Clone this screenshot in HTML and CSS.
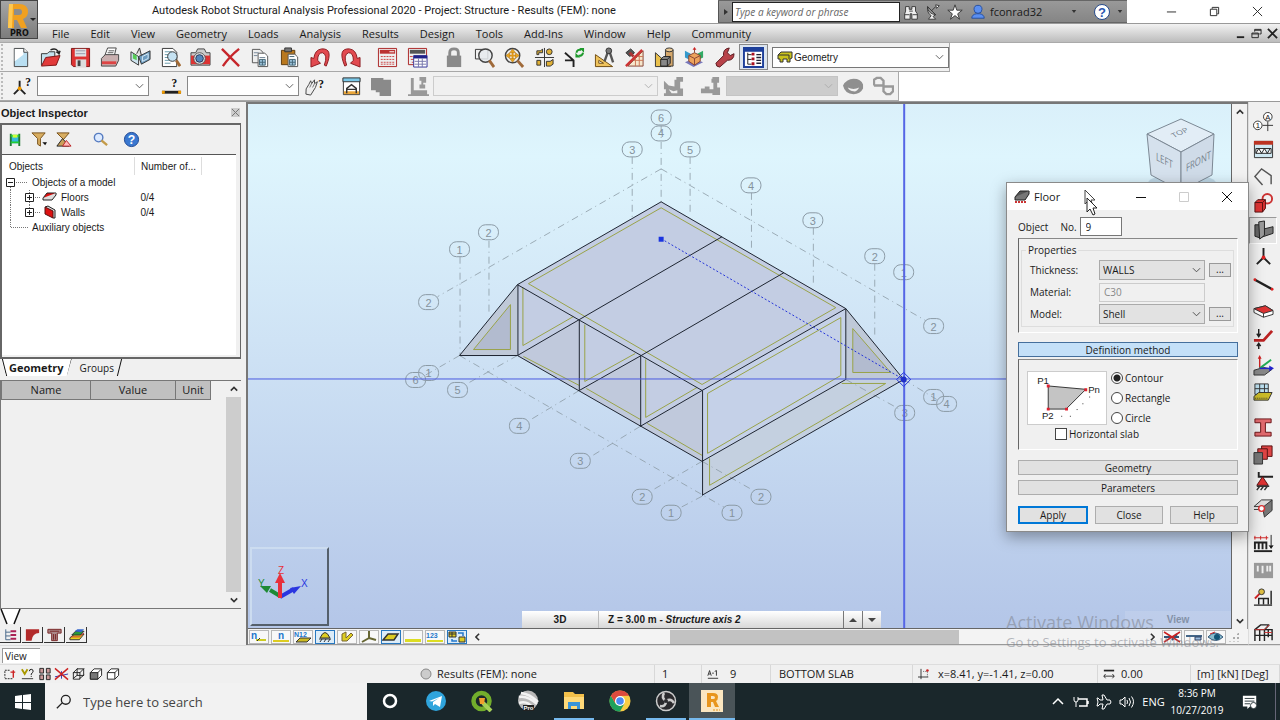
FILE: index.html
```html
<!DOCTYPE html>
<html lang="en">
<head>
<meta charset="utf-8">
<title>Autodesk Robot Structural Analysis Professional 2020</title>
<link rel="stylesheet" href="styles.css">
</head>
<body>
<header class="titlebar">
  <button class="app-button" aria-label="Application menu">
    <svg viewBox="0 0 38 38"><path d="M7 27L8 3h10q9 0 9 8 0 5-5 7l4 9h-6l-4-8h-3v8z" fill="#f0a020"/><path d="M13 8h5q3 0 3 3t-3 3h-5z" fill="#8d8d8d"/><path d="M7 27L8 3h4l-1 24z" fill="#ffc850"/><path d="M29 17h6l-3 3z" fill="#222"/></svg>
    <span class="pro">PRO</span>
  </button>
  <h1 class="app-title">Autodesk Robot Structural Analysis Professional 2020 - Project: Structure - Results (FEM): none</h1>
  <div class="infocenter">
    <button class="info-arrow" aria-label="Expand search"><svg viewBox="0 0 8 10"><path d="M2 2l4 3-4 3z" fill="#333"/></svg></button>
    <input class="info-search" type="text" placeholder="Type a keyword or phrase" aria-label="Search help">
    <button class="info-icon" aria-label="Search"><svg viewBox="0 0 20 20"><path d="M4 4h4v3h3V4h4v5l2 3v6h-6v-6H9v6H3v-6l1-3z" fill="#eee" stroke="#333"/><path d="M3 13h5M12 13h5M8 9h4" stroke="#333"/></svg></button>
    <button class="info-icon" aria-label="Communication center"><svg viewBox="0 0 20 20"><path d="M4 4q0 8 9 9l-3 2 3 3H5l3-4Q3 11 4 4z" fill="#f4f4f4" stroke="#333"/><path d="M4 4l9 9" stroke="#333"/><path d="M8 9l5-5M13 2l4 1-3 3z" stroke="#333" fill="#fff"/></svg></button>
    <button class="info-icon" aria-label="Favorites"><svg viewBox="0 0 20 20"><path d="M10 2l2 6h6l-5 4 2 6-5-4-5 4 2-6-5-4h6z" fill="#fff" stroke="#333"/></svg></button>
    <button class="user-button"><svg viewBox="0 0 18 18"><circle cx="9" cy="6" r="4.500" fill="#5b8ff0" stroke="#234a9a"/><path d="M2 16q0-4 5-5h4q5 1 5 5z" fill="#5b8ff0" stroke="#234a9a"/></svg><span>fconrad32</span><svg class="drop" viewBox="0 0 8 6"><path d="M1 1h6L4 5z" fill="#333"/></svg></button>
    <button class="help-button" aria-label="Help"><svg viewBox="0 0 18 18"><circle cx="9" cy="9" r="7.500" fill="#fff" stroke="#274b8c"/><text x="9" y="14" text-anchor="middle" class="q-mark">?</text></svg><svg class="drop" viewBox="0 0 8 6"><path d="M1 1h6L4 5z" fill="#333"/></svg></button>
  </div>
  <div class="window-buttons">
    <button aria-label="Minimize"><svg viewBox="0 0 12 12"><path d="M1 6.500h10" stroke="#222"/></svg></button>
    <button aria-label="Restore"><svg viewBox="0 0 12 12"><path d="M1.500 3.500h7v7h-7zM3.500 3V1.500h7v7H9" fill="none" stroke="#222"/></svg></button>
    <button aria-label="Close"><svg viewBox="0 0 12 12"><path d="M1 1l10 10M11 1L1 11" stroke="#222"/></svg></button>
  </div>
</header>

<nav class="menubar">
  <button>File</button><button>Edit</button><button>View</button><button>Geometry</button><button>Loads</button><button>Analysis</button><button>Results</button><button>Design</button><button>Tools</button><button>Add-Ins</button><button>Window</button><button>Help</button><button>Community</button>
  <div class="child-buttons">
    <button aria-label="Minimize view"><svg viewBox="0 0 12 12"><path d="M2 10h8" stroke="#222" stroke-width="2"/></svg></button>
    <button aria-label="Restore view"><svg viewBox="0 0 12 12"><path d="M1 5.500h7v5H1zM1 6.500h7M4 4V1.500h7v5H9M4 2.500h7" fill="none" stroke="#222"/></svg></button>
    <button aria-label="Close view"><svg viewBox="0 0 12 12"><path d="M1 1l10 10M11 1L1 11" stroke="#222" stroke-width="2"/></svg></button>
  </div>
</nav>

<div class="toolrow">
 <div class="toolbar">
  <button aria-label="New"><svg viewBox="0 0 22 22"><path d="M4.500 1.500h10l4 4v15h-14z" fill="#b9dff2" stroke="#444"/><path d="M5 2h9v6L5 15z" fill="#fff"/><path d="M14.500 1.500v4h4" fill="#fff" stroke="#444"/></svg></button>
  <button aria-label="Open"><svg viewBox="0 0 22 22"><path d="M1.500 19V7h6l2-2h6v7" fill="#c4e2ee" stroke="#333"/><path d="M1.500 20L6 11l15-2-4 10z" fill="#e23a3a" stroke="#7d1515"/><path d="M11 3q7-3 9 4l1-3m-1 3l-3-2" fill="none" stroke="#222" stroke-width="1.500"/></svg></button>
  <button aria-label="Save"><svg viewBox="0 0 22 22"><path d="M1.500 1.500h19v19h-17l-2-2z" fill="#d33" stroke="#7d1515"/><path d="M5 2h12v8H5z" fill="#dfe3e6"/><path d="M6 13h11v8H6z" fill="#ddd"/><path d="M8 14h3v6H8z" fill="#444"/><path d="M6 4h10M6 7h10" stroke="#99a"/></svg></button>
  <button aria-label="Print"><svg viewBox="0 0 22 22"><path d="M5 9l3-8h9l-2 8z" fill="#fff" stroke="#444"/><path d="M1.500 12l4-4h14v6l-3 6h-15z" fill="#c9b0b0" stroke="#444"/><path d="M2 15h15v3H2z" fill="#d44"/><path d="M9 4h6M8 6h6" stroke="#555"/></svg></button>
  <button aria-label="Screen preview"><svg viewBox="0 0 22 22"><path d="M1 5l8 5v9L1 14z" fill="#cfe4ef" stroke="#333"/><path d="M9 10l3 8 9-5V4z" fill="#6d9cc0" stroke="#333"/><path d="M3 7l4 2v5l-4-2z" fill="#5c5"/><path d="M7 7l3-6 2 8" fill="#ddd" stroke="#333"/><path d="M13 10l6-3v5l-6 3z" fill="none" stroke="#d9ecf8"/></svg></button>
  <button aria-label="Print preview"><svg viewBox="0 0 22 22"><path d="M2.500 1.500h11l4 4v15h-15z" fill="#fff" stroke="#333"/><path d="M5 5h7M5 8h9M5 11h5M5 14h5M5 17h6" stroke="#69a"/><circle cx="13" cy="10" r="5" fill="#c5e2f2" stroke="#333"/><path d="M17 14l4 6" stroke="#a26a35" stroke-width="3"/></svg></button>
  <button aria-label="Screen capture"><svg viewBox="0 0 22 22"><path d="M1 6h5l2-4h7l2 4h4v13H1z" fill="#ccc" stroke="#444"/><path d="M1 9h20v9H1z" fill="#d33"/><circle cx="10" cy="12" r="6" fill="#eee" stroke="#555"/><circle cx="10" cy="12" r="4" fill="#58b" stroke="#235"/></svg></button>
  <button aria-label="Delete"><svg viewBox="0 0 22 22"><path d="M2 2l18 18M20 2Q10 10 3 20" stroke="#c6262b" stroke-width="2.500" fill="none"/></svg></button>
  <button aria-label="Copy"><svg viewBox="0 0 22 22"><path d="M2.500 2.500h8l3 3v11h-11z" fill="#eee" stroke="#555"/><path d="M8.500 6.500h7l3 3v11h-10z" fill="#fff" stroke="#555"/><path d="M4 6h5M4 9h4M10 11h6" stroke="#789"/><path d="M10 13h6v6h-6z" fill="#9cc4dc" stroke="#467"/><path d="M13 13v6M10 16h6" stroke="#467"/></svg></button>
  <button aria-label="Paste"><svg viewBox="0 0 22 22"><path d="M1.500 3.500h14v15h-14z" fill="#b9781e" stroke="#5c3a0c"/><path d="M5 1h7v4H5z" fill="#777" stroke="#333"/><path d="M8.500 7.500h7l3 3v10h-10z" fill="#fff" stroke="#555"/><path d="M10 13h6v6h-6z" fill="#9cc4dc" stroke="#467"/><path d="M13 13v6M10 16h6M10 10h5" stroke="#467"/></svg></button>
  <button aria-label="Undo"><svg viewBox="0 0 22 22"><path d="M17 20q8-19-5-18Q5 3 4 12l-3-1v10l10-4-3-3q0-8 5-8 6 2 2 13z" fill="#e24a50" stroke="#8a1b20"/></svg></button>
  <button aria-label="Redo"><svg viewBox="0 0 22 22"><path d="M5 20Q-3 1 10 2q7 1 8 10l3-1v10l-10-4 3-3q0-8-5-8-6 2-2 13z" fill="#e24a50" stroke="#8a1b20"/></svg></button>
  <span class="gap"></span>
  <button aria-label="Calculations"><svg viewBox="0 0 22 22"><path d="M1.500 1.500h19v19h-19z" fill="#eee" stroke="#a22"/><path d="M3 3h16v4H3z" fill="#b33"/><path d="M13 5h5" stroke="#fff"/><path d="M4 10h14M4 13h14M4 16h14M4 18h14" stroke="#c44" stroke-dasharray="2 1"/></svg></button>
  <button aria-label="Analysis types"><svg viewBox="0 0 22 22"><path d="M1.500 1.500h19v17h-19z" fill="#eee" stroke="#a22"/><path d="M3 3h16v4H3z" fill="#555"/><path d="M3 10h3M4 13h3M5 16h3" stroke="#c44"/><path d="M7 9h14v12H7z" fill="#fff" stroke="#339"/><path d="M7 9h14v3H7z" fill="#228"/><path d="M8 15h12M8 18h12M12 12v9M16 12v9" stroke="#77a"/></svg></button>
  <span class="gap"></span>
  <button aria-label="Lock results"><svg viewBox="0 0 22 22"><path d="M6 10V6q0-4 4.500-4T15 6v4" fill="none" stroke="#8a8a8a" stroke-width="3"/><path d="M3 9h15v12H3z" fill="#8a8a8a"/></svg></button>
  <button aria-label="Zoom window"><svg viewBox="0 0 22 22"><path d="M1.500 2.500h13v10h-13z" fill="none" stroke="#333"/><circle cx="12" cy="9" r="7" fill="#e6ebee" fill-opacity=".85" stroke="#444" stroke-width="1.500"/><path d="M16 14l5 7" stroke="#a06a3a" stroke-width="3"/></svg></button>
  <button aria-label="Zoom all"><svg viewBox="0 0 22 22"><circle cx="9" cy="9" r="7.500" fill="#eee" stroke="#444" stroke-width="1.500"/><path d="M9 4v10M4 9h10" stroke="#e0981a" stroke-width="2"/><path d="M9 2L6 6h6zM9 16l-3-4h6zM2 9l4-3v6zM16 9l-4-3v6z" fill="#e9a520" stroke="#a86d10" stroke-width=".5"/><path d="M14 14l6 7" stroke="#a06a3a" stroke-width="3"/></svg></button>
  <button aria-label="Redraw"><svg viewBox="0 0 22 22"><path d="M11 1v20M1 11h20" stroke="#333"/><path d="M3 4h4l2-2v4H5v2H3zM3 14h4v5H3zM13 15h4l3-2v5l-3 2h-4z" fill="#e0b035" stroke="#333"/><circle cx="16" cy="5" r="3" fill="#e0b035" stroke="#333"/></svg></button>
  <button aria-label="Rotate view"><svg viewBox="0 0 22 22"><path d="M1 6l9 8v7M10 14H1" stroke="#222" stroke-width="2" fill="none"/><path d="M13 6q1-4 5-3M20 6q-1 4-5 3" stroke="#1e9a2c" stroke-width="2" fill="none"/><path d="M16 1h5v5zM12 11V6l5 5z" fill="#1e9a2c"/></svg></button>
  <button aria-label="Preferences"><svg viewBox="0 0 22 22"><path d="M1.500 8v12.500h18z" fill="#efc35c" stroke="#6d4a10"/><path d="M5 14v3h5z" fill="#fff" stroke="#6d4a10"/><path d="M15 4l-4 11M16 4l4 12" stroke="#555" stroke-width="2.500"/><circle cx="15.500" cy="4" r="3" fill="#777" stroke="#333"/></svg></button>
  <button aria-label="Sections"><svg viewBox="0 0 22 22"><path d="M2 6l5-4 4 4-5 4z" fill="#555" stroke="#333"/><path d="M6 6l4 4" stroke="#a33" stroke-width="3"/><path d="M20 4L4 20h16z" fill="#f6e6cc" stroke="#843"/><path d="M20 10h-6M20 14H10M16 8v12M12 12v8" stroke="#c75"/><path d="M2 20L19 3" stroke="#c33" stroke-width="2.500"/></svg></button>
  <button aria-label="Materials"><svg viewBox="0 0 22 22"><path d="M1.500 6v14.500h16z" fill="#e9c04c" stroke="#333"/><path d="M12 3h8v17h-8z" fill="#d5a86c" stroke="#333"/><ellipse cx="16" cy="3" rx="4" ry="2" fill="#e8c896" stroke="#333"/><path d="M7 13l3-3h7v7l-3 3H7zM7 13h7v7M14 13l3-3" fill="#888" stroke="#222"/></svg></button>
  <button aria-label="Supports"><svg viewBox="0 0 22 22"><path d="M1 4l6 3v7l-6-3z" fill="#39c" /><path d="M20 4l-6 3v7l6-3z" fill="#3a6"/><path d="M1 16l9-4 10 4-10 5z" fill="#77b"/><path d="M5 9l6-3 6 3v6l-6 4-6-4z" fill="#eda35c" stroke="#843"/><path d="M5 9l6 3 6-3M11 12v7M11 1v5" stroke="#843" fill="none"/><path d="M9 3l2-3 2 3z" fill="#c22"/></svg></button>
  <button aria-label="Tools"><svg viewBox="0 0 22 22"><path d="M2 17l8-8q-1-7 6-8l-2 5 3 3 4-2q0 7-7 7l-8 7q-4 0-4-4z" fill="#b8434a" stroke="#5a1a20"/></svg></button>
  <button class="pressed" aria-label="Object inspector"><svg viewBox="0 0 22 22"><path d="M1 1h20v20H1z" fill="#fff" stroke="#1d3f9a" stroke-width="2"/><path d="M1 1h20v4H1z" fill="#1d3f9a"/><path d="M5 6v12M5 8h4M5 13h4M5 18h4" stroke="#222"/><path d="M9 6h3v3H9zM9 11h3v3H9zM9 16h3v3H9z" fill="#a12"/><path d="M14 8h5M14 11h5M14 14h5M14 17h5" stroke="#223" stroke-width="1.500"/></svg></button>
  <div class="layout-pick">
    <svg viewBox="0 0 16 14"><path d="M1 5l3-3h11v6l-2 1v3h-3V9H6v3H3V9H1z" fill="#c9c21c" stroke="#333"/><path d="M1 5h11v4" fill="none" stroke="#333"/></svg>
    <select aria-label="Layout"><option>Geometry</option></select>
    <svg class="chev" viewBox="0 0 10 6"><path d="M1 1l4 4 4-4" fill="none" stroke="#555"/></svg>
  </div>
 </div>
</div>

<div class="toolrow">
 <div class="toolbar toolbar-select">
  <button aria-label="Node selection"><svg viewBox="0 0 22 22"><path d="M8 5v8M8 13l-6 6M8 13l6 6" stroke="#222" stroke-width="2"/><circle cx="8" cy="13" r="2" fill="#e90"/><text x="17" y="10" text-anchor="middle" class="ic-q">?</text></svg></button>
  <div class="combo"><select aria-label="Nodes"><option></option></select><svg class="chev" viewBox="0 0 10 6"><path d="M1 1l4 4 4-4" fill="none" stroke="#555"/></svg></div>
  <button class="wide" aria-label="Bar selection"><svg viewBox="0 0 22 22"><path d="M1 17h20" stroke="#222" stroke-width="3"/><path d="M1 17h3M18 17h3" stroke="#e90" stroke-width="3"/><text x="14" y="11" text-anchor="middle" class="ic-q">?</text></svg></button>
  <div class="combo"><select aria-label="Bars"><option></option></select><svg class="chev" viewBox="0 0 10 6"><path d="M1 1l4 4 4-4" fill="none" stroke="#555"/></svg></div>
  <button aria-label="Object selection"><svg viewBox="0 0 22 22"><path d="M2 19q-1-6 3-10l2-4 1 3 3-4v4l3-2-2 6-5 8z" fill="#eee" stroke="#444"/><path d="M6 12l2-4M9 12l2-4" stroke="#777"/><text x="18" y="13" text-anchor="middle" class="ic-q">?</text></svg></button>
  <span class="gap"></span>
  <button aria-label="View filter"><svg viewBox="0 0 22 22"><path d="M2.500 2.500h17v17h-17z" fill="#fff" stroke="#333"/><path d="M2 2h18v4H2z" fill="#7ac8e8" stroke="#333"/><path d="M3 16h16v3H3z" fill="#e9a63a"/><path d="M6 18v-5l5-4 5 4v5M6 14h10" stroke="#333" fill="none" stroke-width="1.500"/></svg></button>
  <button aria-label="Load table"><svg viewBox="0 0 22 22"><path d="M0 2h13v2h8v17H9v-4H5v-2H0z" fill="#8a8a8a"/></svg></button>
  <span class="gap"></span>
  <button aria-label="Case"><svg viewBox="0 0 22 22"><path d="M3 2h3v13h14v4h2v2H0v-2h3zM12 1h7v6h-3v2h2v4h-6V9h2V5h-2z" fill="#999"/></svg></button>
  <div class="combo case"><select aria-label="Load case" disabled><option></option></select><svg class="chev" viewBox="0 0 10 6"><path d="M1 1l4 4 4-4" fill="none" stroke="#aaa"/></svg></div>
  <button aria-label="Mode"><svg viewBox="0 0 22 22"><path d="M1 5l5 5 6 1V4h2V1h7v5h-3v7h3v8H1v-3h2v-4H1zM6 14l5 2 4-1v3H9z" fill="#999" fill-rule="evenodd"/></svg></button>
  <button class="wide" aria-label="Components"><svg viewBox="0 0 22 22"><path d="M13 1h7v6h-2v5h3v8h-8v-2H1v-5h4v-2h5v3h4V7h-2V3h1z" fill="#999"/></svg></button>
  <div class="combo mode"><select aria-label="Mode list" disabled><option></option></select><svg class="chev" viewBox="0 0 10 6"><path d="M1 1l4 4 4-4" fill="none" stroke="#aaa"/></svg></div>
  <button aria-label="Deformation"><svg viewBox="0 0 22 22"><path d="M0 10Q4 3 11 3q8 0 10 6v4q-3 6-10 6Q2 19 0 10zm5 2q6 3 12 0-3 5-6 4-4 0-6-4z" fill="#8f8f8f" fill-rule="evenodd"/></svg></button>
  <button aria-label="Diagram"><svg viewBox="0 0 22 22"><path d="M1 10V4l3-2h4l3 3v11l3 3h4l3-3v-5h-9M1 10h9" fill="none" stroke="#999" stroke-width="2.500"/></svg></button>
 </div>
</div>

<main class="workspace">
 <aside class="inspector">
  <div class="panel-head"><h2>Object Inspector</h2><button aria-label="Close panel"><svg viewBox="0 0 9 9"><path d="M1 1l7 7M8 1L1 8" stroke="#777"/></svg></button></div>
  <div class="inspector-box">
   <div class="inspector-tools">
    <button aria-label="Show"><svg viewBox="0 0 18 18"><path d="M4 5h9v8H4z" fill="#3bd"/><path d="M4 3v13M13 3v13" stroke="#273" stroke-width="2"/><path d="M4 5h9M4 12h9" stroke="#2c3" stroke-width="2"/><path d="M6 4h5v3H6z" fill="#cf3"/></svg></button>
    <button aria-label="Filter"><svg viewBox="0 0 18 18"><path d="M1 2h14L10 8v8l-3-2V8z" fill="#d8ae62" stroke="#765018"/><path d="M12 12h5l-2 3z" fill="#111"/></svg></button>
    <button aria-label="Filter selection"><svg viewBox="0 0 18 18"><path d="M2 2h13L9 9z" fill="#d8ae62" stroke="#765018"/><path d="M2 16L8 8l7 8z" fill="#c9a05a" stroke="#222"/><path d="M8 16l4-6 5 6z" fill="#fbb" stroke="#b22"/></svg></button>
    <button class="spaced" aria-label="Find"><svg viewBox="0 0 18 18"><circle cx="7" cy="7" r="4.500" fill="#dceaff" stroke="#557bc0" stroke-width="1.500"/><path d="M10 10l6 5" stroke="#c39a48" stroke-width="2.500"/></svg></button>
    <button class="spaced" aria-label="Inspector help"><svg viewBox="0 0 18 18"><circle cx="9" cy="9" r="7.500" fill="#3a78d0" stroke="#1c4590"/><text x="9" y="14" text-anchor="middle" class="q-white">?</text></svg></button>
   </div>
   <div class="tree-wrap">
   <table class="tree">
    <thead><tr><th scope="col">Objects</th><th scope="col" class="num">Number of...</th></tr></thead>
    <tbody>
     <tr><td><div class="node"><svg class="t1" viewBox="0 0 27 15"><path d="M4.500 3.500h8v8h-8z" fill="#fff" stroke="#222"/><path d="M6 7.500h5" stroke="#222"/><path d="M14 7.500h12M8.500 12v3" stroke="#777" stroke-dasharray="1 1"/></svg>Objects of a model</div></td><td></td></tr>
     <tr><td><div class="node"><svg class="t2" viewBox="0 0 56 15"><path d="M8.500 0v15M27.500 0v3M27.500 12v3M33 7.500h5" stroke="#777" stroke-dasharray="1 1"/><path d="M23.500 3.500h8v8h-8z" fill="#fff" stroke="#222"/><path d="M25 7.500h5M27.500 5v5" stroke="#222"/><path d="M41 8l4-5h9l-4 5z" fill="#d11" stroke="#222"/><path d="M41 8v2h9l4-5V3" fill="#ddd" stroke="#222"/></svg>Floors</div></td><td class="num">0/4</td></tr>
     <tr><td><div class="node"><svg class="t2" viewBox="0 0 56 15"><path d="M8.500 0v15M27.500 0v3M33 7.500h5" stroke="#777" stroke-dasharray="1 1"/><path d="M23.500 3.500h8v8h-8z" fill="#fff" stroke="#222"/><path d="M25 7.500h5M27.500 5v5" stroke="#222"/><path d="M43 2l3-1 7 4v8l-2 0" fill="#ddd" stroke="#222"/><path d="M43 2l8 4v7l-8-4z" fill="#d11" stroke="#511"/></svg>Walls</div></td><td class="num">0/4</td></tr>
     <tr><td><div class="node"><svg class="t1" viewBox="0 0 27 15"><path d="M8.500 0v7M9 7.500h17" stroke="#777" stroke-dasharray="1 1" fill="none"/></svg>Auxiliary objects</div></td><td></td></tr>
    </tbody>
   </table>
   </div>
  </div>
  <div class="tabs">
    <button class="tab active">Geometry</button><button class="tab">Groups</button>
  </div>
  <div class="props">
    <div class="props-body"><table class="props-table"><thead><tr><th scope="col" class="c-name">Name</th><th scope="col" class="c-value">Value</th><th scope="col" class="c-unit">Unit</th></tr></thead></table></div>
    <div class="vscroll"><button aria-label="Scroll up"><svg viewBox="0 0 10 6"><path d="M1 5l4-4 4 4" fill="none" stroke="#333" stroke-width="2"/></svg></button><span class="thumb"></span><button aria-label="Scroll down"><svg viewBox="0 0 10 6"><path d="M1 1l4 4 4-4" fill="none" stroke="#333" stroke-width="2"/></svg></button></div>
  </div>
  <div class="empty-tab"><svg viewBox="0 0 22 16"><path d="M1 0h19l-6 15H7z" fill="#fff"/><path d="M1 0l6 15M20 0l-6 15" stroke="#111" stroke-width="1.500"/></svg></div>
  <div class="panel-tabs">
    <button class="on" aria-label="Tree"><svg viewBox="0 0 18 14"><path d="M4 1v11M4 4h5M4 8h5M4 12h5" stroke="#468" fill="none"/><path d="M9 3h6M9 7h6M9 11h6" stroke="#a25" stroke-width="2"/></svg></button>
    <button aria-label="Steel"><svg viewBox="0 0 18 14"><path d="M2 1h14v4q-7 0-8 8H2z" fill="#b22a2a"/></svg></button>
    <button aria-label="Concrete"><svg viewBox="0 0 18 14"><path d="M2 1h14v4h-4v8H6V5H2z" fill="#a88" stroke="#722"/><path d="M4 3h10M8 6v6M10 6v6" stroke="#722"/></svg></button>
    <button aria-label="Foundation"><svg viewBox="0 0 18 14"><path d="M2 10l5-4h10l-5 6H2z" fill="#e8d020" stroke="#333"/><path d="M4 7l4-4h9l-4 4z" fill="#2a9a3a" stroke="#333"/><path d="M7 3l3-2h7l-3 3z" fill="#36c"/><path d="M3 9h9l5-4" stroke="#c33" fill="none"/></svg></button>
  </div>
 </aside>

 <section class="viewer">
  <div class="view-row">
   <div class="canvas">
    <svg class="model" viewBox="249 104 983 525" preserveAspectRatio="xMidYMid meet">
     <g class="faces">
      <path d="M662 202L847 309 703 391 518 285z"/>
      <path d="M518 285L703 391V462L518 356z"/>
      <path d="M703 391L847 309V380L703 462z" class="f2"/>
      <path d="M703 462L847 380H905L703 496z" class="f3"/>
      <path d="M460 356L518 285V356zM847 309L905 380H847z" class="f4"/>
      <path d="M474 350L511 305V350zM854 329V373H892z" class="f5"/>
      <path d="M518 356L580 320V391zM580 391L641 356V427zM641 427L703 391V462z" class="f6"/>
     </g>
     <g class="grid">
      <path d="M460.500 257V356M489.500 241V313M633 157V218M662 126V202M691 157V216M752.500 193V252M814.500 228V287M876 264V338M662 169L438 297M662 169L927 321M460 356L420 379M460 356L725 508M518 356L468 384M580 391L530 421M641 427L592 457M703 462L653 491M703 497L682 508M703 462L754 491M905 380L938 400M847 380L903 411"/>
     </g>
     <g class="inner">
      <path d="M662 208L837 308 703 385 529 284z"/>
      <path d="M511 305V350H474zM854 329V373H892z"/>
      <path d="M523.500 288V346L574 317M585.500 325V382L636 354M646.500 360V418L698 388"/>
      <path d="M524 357L580 386M587 389L641 420M648 424L703 456"/>
      <path d="M708.500 394L842 318V376L708.500 454z"/>
      <path d="M710.500 459V486L887 384H843"/>
     </g>
     <g class="edges">
      <path d="M662 202L847 309 703 391 518 285z"/>
      <path d="M580 320L723 237M642 356L785 273"/>
      <path d="M518.500 285V356M580 320V391M641.500 356V427M703.500 391V496M847 309V380"/>
      <path d="M518 356L580 320M580 391L642 356M641 427L703 391M703 462L847 380"/>
      <path d="M518 356L703 462M703 496L905 380L847 309M518 285L460 356H518"/>
     </g>
     <g class="bubbles">
      <rect x="652" y="110" width="20" height="15" rx="7"/><rect x="652" y="126" width="20" height="15" rx="7"/><rect x="623" y="142" width="20" height="15" rx="7"/><rect x="681" y="142" width="20" height="15" rx="7"/><rect x="742" y="178" width="20" height="15" rx="7"/><rect x="804" y="213" width="20" height="15" rx="7"/><rect x="866" y="249" width="20" height="15" rx="7"/><rect x="895" y="265" width="20" height="15" rx="7"/><rect x="925" y="319" width="20" height="15" rx="7"/><rect x="925" y="390" width="20" height="15" rx="7"/><rect x="938" y="397" width="20" height="15" rx="7"/><rect x="896" y="406" width="20" height="15" rx="7"/><rect x="752" y="490" width="20" height="15" rx="7"/><rect x="723" y="506" width="20" height="15" rx="7"/><rect x="662" y="506" width="20" height="15" rx="7"/><rect x="633" y="490" width="20" height="15" rx="7"/><rect x="571" y="454" width="20" height="15" rx="7"/><rect x="510" y="419" width="20" height="15" rx="7"/><rect x="448" y="383" width="20" height="15" rx="7"/><rect x="419" y="366" width="20" height="15" rx="7"/><rect x="406" y="373" width="20" height="15" rx="7"/><rect x="419" y="295" width="20" height="15" rx="7"/><rect x="450" y="242" width="20" height="15" rx="7"/><rect x="479" y="225" width="20" height="15" rx="7"/>
     </g>
     <g class="marks">
      <text x="662" y="122">6</text><text x="662" y="137">4</text><text x="633" y="154">3</text><text x="691" y="154">5</text><text x="752" y="190">4</text><text x="814" y="225">3</text><text x="876" y="261">2</text><text x="905" y="277">1</text><text x="935" y="331">2</text><text x="935" y="402">1</text><text x="948" y="409">4</text><text x="906" y="418">3</text><text x="762" y="502">2</text><text x="733" y="518">1</text><text x="672" y="518">1</text><text x="643" y="502">2</text><text x="581" y="466">3</text><text x="520" y="431">4</text><text x="458" y="395">5</text><text x="429" y="378">1</text><text x="416" y="385">6</text><text x="429" y="307">2</text><text x="460" y="254">1</text><text x="489" y="237">2</text>
     </g>
     <path class="rubber" d="M662 239L905 380"/>
     <path class="cross-h" d="M-1000 379.500H3000"/><path class="cross-v" d="M905.500 -500V1500"/>
     <path d="M659.500 237h5v5h-5z" fill="#1a34e0"/>
     <path d="M905 373l7 7-7 7-7-7z" class="snap"/><circle cx="905" cy="380" r="3" fill="#2030c8"/>
    </svg>
    <svg class="cube" viewBox="0 0 80 84"><ellipse cx="41" cy="74" rx="34" ry="9" fill="#a9c3d6" opacity=".6"/><path d="M6 25L40 10 73 25 40 43z" fill="#e2edf6" stroke="#7c8894"/><path d="M6 25L40 43V82L10 66z" fill="#d5e1ed" stroke="#7c8894"/><path d="M73 25L40 43V82L71 66z" fill="#cfdbe8" stroke="#7c8894"/><text class="cube-t" transform="matrix(.87 -.4 .55 .6 33 29)">TOP</text><text class="cube-t" transform="matrix(.87 .45 0 1.2 15 51)">LEFT</text><text class="cube-t" transform="matrix(.87 -.48 0 1.2 45 63)">FRONT</text></svg>
    <div class="triad"><svg viewBox="0 0 76 76"><path d="M28 47L18 41" stroke="#1e8a35" stroke-width="4"/><path d="M8 37l11 0-4 7z" fill="#1e8a35"/><path d="M28 48L42 40" stroke="#2a36e0" stroke-width="4"/><path d="M49 37l-7 8-4-6z" fill="#2a36e0"/><path d="M28 49V33" stroke="#e8303a" stroke-width="4"/><path d="M28 24l5 10H23z" fill="#e8303a"/><text x="26" y="25" class="az">Z</text><text x="6" y="38" class="ay">Y</text><text x="49" y="38" class="ax">X</text></svg></div>
    <div class="levelbar"><span class="l-mode">3D</span><span class="l-axis">Z = 3.00 m <i>- Structure axis 2</i></span><button aria-label="Level up"><svg viewBox="0 0 8 6"><path d="M0 5h8L4 1z" fill="#444"/></svg></button><button aria-label="Level down"><svg viewBox="0 0 8 6"><path d="M0 1h8L4 5z" fill="#444"/></svg></button></div>
    <div class="view-label">View</div>
   </div>
   <div class="vscroll main-scroll"><button aria-label="View scroll up"><svg viewBox="0 0 10 6"><path d="M1 5l4-4 4 4" fill="none" stroke="#333" stroke-width="2"/></svg></button><span></span><button aria-label="View scroll down"><svg viewBox="0 0 10 6"><path d="M1 1l4 4 4-4" fill="none" stroke="#333" stroke-width="2"/></svg></button></div>
  </div>
  <div class="display-bar">
    <button aria-label="Node numbers"><svg viewBox="0 0 18 12"><text x="1" y="8" class="n-ic">n</text><path d="M6 9h10" stroke="#cc2" stroke-width="2"/><path d="M7 10l3-3" stroke="#333"/></svg></button>
    <button aria-label="Bar numbers"><svg viewBox="0 0 18 12"><text x="6" y="8" class="n-ic">n</text><path d="M1 10h16" stroke="#dc2" stroke-width="2"/></svg></button>
    <button aria-label="Panel numbers"><svg viewBox="0 0 18 12"><path d="M2 11l4-4h11l-4 4z" fill="#cb2" stroke="#333"/><text x="0" y="6" class="n-sm">N12</text></svg></button>
    <button class="on" aria-label="Supports"><svg viewBox="0 0 18 12"><path d="M4 7q5-11 10 0z" fill="#dc2" stroke="#333"/><path d="M3 8h12M4 11l2-3M8 11l2-3M12 11l2-3" stroke="#333"/></svg></button>
    <button aria-label="Section shape"><svg viewBox="0 0 18 12"><path d="M4 3v7h5l6-6-2-2-5 5V1z" fill="#dc2" stroke="#763"/></svg></button>
    <button aria-label="Local systems"><svg viewBox="0 0 18 12"><path d="M9 0v7l-7 4M9 7l7 2" stroke="#663" stroke-width="2" fill="none"/></svg></button>
    <button class="on" aria-label="Panels"><svg viewBox="0 0 18 12"><path d="M1 9l5-6h10l-4 6z" fill="#dc2" stroke="#333" stroke-width="1.500"/></svg></button>
    <button aria-label="Loads"><svg viewBox="0 0 18 12"><path d="M1 8h16v3H1z" fill="#dd2"/></svg></button>
    <button aria-label="Load values"><svg viewBox="0 0 18 12"><path d="M1 9h16v2H1z" fill="#dd2"/><text x="0" y="7" class="n-sm">123</text></svg></button>
    <button class="on" aria-label="Grid"><svg viewBox="0 0 18 12"><path d="M1 1h7v5H1zM1 3h7M4 1v5" stroke="#333" fill="#dc2"/><path d="M11 6h6v5h-6z" fill="#dc2" stroke="#333"/><path d="M10 2h5v3M4 8v2h5" fill="none" stroke="#27c" stroke-width="1.500"/></svg></button>
    <button class="hs-arrow" aria-label="Scroll left"><svg viewBox="0 0 6 10"><path d="M5 1L1 5l4 4" fill="none" stroke="#333" stroke-width="2"/></svg></button>
    <div class="hs-track"><span class="hs-thumb"></span></div>
    <button class="hs-arrow2" aria-label="Scroll right"><svg viewBox="0 0 6 10"><path d="M1 1l4 4-4 4" fill="none" stroke="#333" stroke-width="2"/></svg></button>
    <button aria-label="Hide axes"><svg viewBox="0 0 18 12"><path d="M1 6h15M9 9l5-6" stroke="#357" stroke-width="2"/><path d="M1 1l16 10M17 1L1 11" stroke="#c22" stroke-width="1.500"/></svg></button>
    <button aria-label="Glasses"><svg viewBox="0 0 18 12"><path d="M1 5h16" stroke="#468" stroke-width="2"/><path d="M10 6h6v3h-6z" fill="#9bd" stroke="#346"/></svg></button>
    <button aria-label="Render"><svg viewBox="0 0 18 12"><path d="M1 6Q8-2 16 6q-7 7-15 0z" fill="#8bc" stroke="#357"/><circle cx="10" cy="6" r="3" fill="#157"/><path d="M3 3l5-2" stroke="#c22"/></svg></button>
    <span class="grip"></span>
  </div>
 </section>

 <nav class="sidebar" aria-label="Structure model">
   <button aria-label="Axis definition"><svg viewBox="0 0 22 22"><circle cx="5" cy="14" r="4.500" fill="#fff" stroke="#333"/><circle cx="15.500" cy="5" r="4.500" fill="#fff" stroke="#333"/><text x="5" y="17" class="s-n">1</text><text x="15.500" y="8" class="s-n">A</text><path d="M10 14h11M15.500 10v10" stroke="#333"/></svg></button>
   <button aria-label="Structure type"><svg viewBox="0 0 22 22"><path d="M1.500 2.500h19v17h-19z" fill="#cfe8f2" stroke="#333"/><path d="M1 2h20v4H1z" fill="#b32"/><path d="M3 15V10h16v5zl3-5 3 5 3-5 3 5 3-5" fill="#fff" stroke="#222"/></svg></button>
   <button aria-label="Polyline"><svg viewBox="0 0 22 22"><path d="M10 20L2 11l7-8 10 7v9" fill="none" stroke="#555" stroke-width="1.500"/></svg></button>
   <button aria-label="Extrude"><svg viewBox="0 0 22 22"><circle cx="15" cy="6" r="5" fill="none" stroke="#c33" stroke-width="2"/><path d="M2 10l3-3h8v9l-3 4H2z" fill="#d33" stroke="#511"/><path d="M2 10h8v10M10 10l3-3" stroke="#511" fill="none"/></svg></button>
   <button class="on" aria-label="Objects"><svg viewBox="0 0 22 22"><path d="M2 5h6v14l-6-2z" fill="#666" stroke="#222"/><path d="M9 10l12-3v7l-12 4z" fill="#777" stroke="#222"/><path d="M6 2l6-1v15l-5 4z" fill="#999" stroke="#222"/></svg></button>
   <button aria-label="Nodes"><svg viewBox="0 0 22 22"><path d="M11 1v10L4 18M11 11l7 7" stroke="#222" stroke-width="2" fill="none"/><circle cx="11" cy="11" r="2" fill="#d22"/></svg></button>
   <button aria-label="Bars"><svg viewBox="0 0 22 22"><path d="M2 6l18 10" stroke="#222" stroke-width="2.500"/><circle cx="2" cy="6" r="1.500" fill="#d22"/><circle cx="20" cy="16" r="1.500" fill="#d22"/></svg></button>
   <button aria-label="Panels"><svg viewBox="0 0 22 22"><path d="M1 8l12-3 8 5v4l-10 3-10-5z" fill="#fff" stroke="#333"/><path d="M1 8l12-3 8 5-10 3z" fill="#d33" stroke="#333"/><path d="M11 13v4" stroke="#333"/></svg></button>
   <button aria-label="Rigid links"><svg viewBox="0 0 22 22"><path d="M1 13h10l9-10" stroke="#b22" stroke-width="3" fill="none"/><path d="M6 1v8M6 22v-6M4 6l2 3 2-3M4 19l2-3 2 3" stroke="#222" fill="none" stroke-width="1.500"/></svg></button>
   <button aria-label="Axes"><svg viewBox="0 0 22 22"><path d="M1 16l10-3 9 2-8 6H1z" fill="#888" stroke="#333"/><path d="M7 14V3" stroke="#c22" stroke-width="1.500"/><path d="M7 14l12-9" stroke="#2a5" stroke-width="2"/><path d="M7 14h13" stroke="#22c" stroke-width="1.500"/><path d="M5 4l2-4 2 4z" fill="#c22"/><path d="M17 11l5 3-5 3z" fill="#22c"/></svg></button>
   <button aria-label="Cladding"><svg viewBox="0 0 22 22"><path d="M2 2h14v11H2zM2 7h14M7 2v11M12 2v11" fill="#bde0f0" stroke="#333"/><path d="M1 15l5-4h14l-4 8H1z" fill="#cabb28" stroke="#333"/><path d="M2 17h13" stroke="#333" stroke-dasharray="1 1"/></svg></button>
   <span class="vgap"></span>
   <button aria-label="Steel sections"><svg viewBox="0 0 22 22"><path d="M2 2h17v4h-6v10h6v4H2v-4h6V6H2z" fill="#e06a6e" stroke="#6a1518"/></svg></button>
   <button aria-label="Thickness"><svg viewBox="0 0 22 22"><path d="M9 2h11v11H9z" fill="#d44" stroke="#511"/><path d="M5 5h10v11H5z" fill="#d44" stroke="#511"/><path d="M1 9h9v12H1z" fill="#777" stroke="#333"/></svg></button>
   <button aria-label="Support definition"><svg viewBox="0 0 22 22"><path d="M6 1v5h15" stroke="#222" stroke-width="2" fill="none"/><path d="M10 6l6 9H4z" fill="#d33" stroke="#511"/><path d="M4 16h13M4 20l3-4M8 20l3-4M12 20l3-4" stroke="#333" stroke-width="1.500"/></svg></button>
   <button aria-label="Releases"><svg viewBox="0 0 22 22"><path d="M1 9l8-7h11l-6 7z" fill="#ddd" stroke="#333"/><path d="M10 10l10-8v11l-8 7z" fill="#777" stroke="#333"/><path d="M1 12h8" stroke="#333"/><circle cx="9" cy="11" r="3" fill="#fff" stroke="#d33" stroke-width="1.500"/></svg></button>
   <span class="vgap"></span>
   <button aria-label="Load types"><svg viewBox="0 0 22 22"><path d="M1 19h19" stroke="#222" stroke-width="2"/><path d="M2 17v-7h12v7M6 10v7M10 10v7" stroke="#222" stroke-width="2" fill="none"/><path d="M19 2v14M17 13l2 3 2-3" stroke="#222"/><path d="M1 5h15M2 3v4M8 3v4M14 3v4" stroke="#c22"/></svg></button>
   <button aria-label="Load definition"><svg viewBox="0 0 22 22"><path d="M1 3h20v16H1z" fill="#999"/><path d="M5 6v6M10 6v8M15 6v6M18 6v6" stroke="#eee" stroke-width="2"/></svg></button>
   <button aria-label="Load cases"><svg viewBox="0 0 22 22"><path d="M2 12L7 7" stroke="#c22" stroke-width="2"/><circle cx="9" cy="5" r="3" fill="#dcbc40" stroke="#333"/><path d="M1 19h19M6 18v-6h10v6M11 12v6M19 4v14" stroke="#222" stroke-width="1.500" fill="none"/></svg></button>
   <span class="vgap"></span>
   <button aria-label="Structure library"><svg viewBox="0 0 22 22"><path d="M2 20V8h10v12M2 14h18M7 8v12M12 8l5-5M2 8l6-5h9M12 8h8v11M16 8v8" stroke="#222" stroke-width="1.500" fill="none"/><path d="M2 8h10l5-5M12 11h8" stroke="#c33" fill="none"/></svg></button>
 </nav>
</main>

<div class="view-tabs"><input type="text" value="View" aria-label="Toolbar name"></div>

<footer class="statusbar">
  <div class="status-tools">
   <button aria-label="Move"><svg viewBox="0 0 16 14"><path d="M2 3h6M2 12h8M2 4v7" stroke="#222" stroke-dasharray="2 1"/><path d="M11 3v8M8 5h5" stroke="#c22" stroke-width="1.500"/></svg></button>
   <button aria-label="View query"><svg viewBox="0 0 16 14"><path d="M2 2l3 5 3-5" stroke="#a90" stroke-width="2" fill="none"/><path d="M10 4q0-2 2-2t2 2q0 1-2 3v1M12 9v1" stroke="#111" fill="none"/><path d="M2 12h12" stroke="#333"/></svg></button>
   <button aria-label="Tile"><svg viewBox="0 0 16 14"><path d="M3 1h4v5H3zM10 1h4v5h-4zM3 8h4v5H3zM10 8h4v5h-4z" fill="#c99" stroke="#222"/></svg></button>
   <button aria-label="No axes"><svg viewBox="0 0 16 14"><path d="M1 10l14-3M8 12V4" stroke="#33a"/><path d="M1 1l14 12M15 1L1 13" stroke="#c22" stroke-width="1.500"/></svg></button>
   <button aria-label="Wireframe"><svg viewBox="0 0 16 14"><path d="M2.500 5.500h7v7h-7zM6.500 1.500h7v7h-7zM2 6l5-5M9 6l5-5M2 12l5-4M9 12l5-4" fill="none" stroke="#222"/></svg></button>
   <button aria-label="Shaded"><svg viewBox="0 0 16 14"><path d="M2.500 5.500l4-4h8v7l-4 4h-8z" fill="#fff" stroke="#222"/><path d="M2.500 5.500h8v7h-8z" fill="#777" stroke="#222"/><path d="M10 6l4-4" stroke="#222"/></svg></button>
   <button aria-label="Hidden lines"><svg viewBox="0 0 16 14"><path d="M2.500 5.500l4-4h8v7l-4 4h-8zM2.500 5.500h8v7M10 6l4-4" fill="#fff" stroke="#222"/></svg></button>
  </div>
  <div class="cell results"><svg viewBox="0 0 12 12"><circle cx="6" cy="6" r="5" fill="#ccc" stroke="#888"/></svg>Results (FEM): none</div>
  <div class="cell c-count">1</div>
  <div class="cell c-obj"><svg viewBox="0 0 14 12"><path d="M1 8l2-6 2 6M2 6h2M6 5h2M9 3l2-1v6" stroke="#222" fill="none"/><path d="M1 11h12" stroke="#222"/></svg>9</div>
  <div class="cell c-sec">BOTTOM SLAB</div>
  <div class="cell c-xyz"><svg viewBox="0 0 14 12"><path d="M3.500 0v12M0 9.500h12" stroke="#222"/><path d="M6 3h5v6" fill="none" stroke="#555" stroke-dasharray="1 1"/><circle cx="11" cy="2" r="1.500" fill="#c22"/></svg>x=8.41, y=-1.41, z=0.00</div>
  <div class="cell c-len"><svg viewBox="0 0 14 12"><path d="M1 2h12" stroke="#222" stroke-width="2"/><path d="M1 8.500h12M3 6L1 8.500 3 11M11 6l2 2.500-2 2.500" fill="none" stroke="#222"/></svg>0.00</div>
  <div class="cell c-units">[m] [kN] [Deg]</div>
</footer>

<div class="taskbar">
  <button class="start" aria-label="Start"><svg viewBox="0 0 16 16"><path d="M0 2l7-1v7H0zM8 1l8-1v8H8zM0 9h7v6l-7-1zM8 9h8v7l-8-1z" fill="#fff"/></svg></button>
  <div class="task-search"><svg viewBox="0 0 18 18"><circle cx="11" cy="6.500" r="5" fill="none" stroke="#222" stroke-width="1.500"/><path d="M7 10l-6 6" stroke="#222" stroke-width="1.500"/></svg><input type="text" placeholder="Type here to search" aria-label="Type here to search"></div>
  <button class="app" aria-label="Cortana"><svg viewBox="0 0 22 22"><circle cx="11" cy="11" r="6" fill="none" stroke="#fff" stroke-width="2.500"/></svg></button>
  <button class="app" aria-label="Telegram"><svg viewBox="0 0 22 22"><circle cx="11" cy="11" r="10" fill="#2fa4dc"/><path d="M4 11l13-5-2 11-5-3-2 2v-4l6-4-7 3.500z" fill="#fff"/></svg></button>
  <button class="app" aria-label="QGIS"><svg viewBox="0 0 22 22"><circle cx="10.500" cy="11" r="8" fill="none" stroke="#72ad2c" stroke-width="4.500"/><path d="M12 13l8 8" stroke="#a6d158" stroke-width="4"/><path d="M8 8h6l-1 6H9z" fill="#f0a02c"/></svg></button>
  <button class="app" aria-label="Earth Pro"><svg viewBox="0 0 22 22"><circle cx="11" cy="10.500" r="10" fill="#b8b8b8"/><path d="M2 7q8-2 18 7M4 3q9 1 17 9M2 13q8-3 14 5" stroke="#f2f2f2" stroke-width="2.500" fill="none"/><path d="M6 15h11v6H6z" fill="#222"/><text x="11.500" y="20" class="s-pro">Pro</text></svg></button>
  <button class="app open" aria-label="File Explorer"><svg viewBox="0 0 22 22"><path d="M1 2h9l2 2h9v15H1z" fill="#f3c04a"/><path d="M1 7h20v12H1z" fill="#ffd978"/><path d="M5 19v-7h12v7h-3v-3H8v3z" fill="#3a94d8"/></svg></button>
  <button class="app" aria-label="Chrome"><svg viewBox="0 0 22 22"><circle cx="11" cy="11" r="10.500" fill="#f8cd45"/><path d="M11 21.500A10.500 10.500 0 0 1 1.900 5.700L6.500 13.500 11 16 15.500 13.500z" fill="#1ea15d"/><path d="M1.900 5.700A10.500 10.500 0 0 1 20.100 5.700L11 6 6 11 6.500 13.500z" fill="#dd4b3e"/><circle cx="11" cy="11" r="5" fill="#fff"/><circle cx="11" cy="11" r="3.800" fill="#4a8af4"/></svg></button>
  <button class="app open" aria-label="OBS"><svg viewBox="0 0 22 22"><circle cx="11" cy="11" r="9.500" fill="#2a2a2d" stroke="#ccc" stroke-width="1.500"/><path d="M11 11Q6 8 9 3M11 11q0 6-6 5M11 11q5-3 8 2" stroke="#ccc" stroke-width="2.500" fill="none"/><circle cx="11" cy="11" r="2" fill="#2a2a2d"/></svg></button>
  <button class="app open current" aria-label="Robot"><svg viewBox="0 0 22 22"><path d="M0 0h22v22H0z" fill="#fbe6c0"/><path d="M6 17V3h6q5 0 5 4 0 3-2 4l3 6h-4l-2-5h-2v5z" fill="#e8951c"/><path d="M10 6h2q2 0 2 1.500T12 9h-2z" fill="#fbe6c0"/><path d="M12 20h7" stroke="#e8951c" stroke-dasharray="2 1"/></svg></button>
  <div class="tray">
   <button aria-label="Hidden icons"><svg viewBox="0 0 16 16"><path d="M3 10l5-5 5 5" fill="none" stroke="#fff" stroke-width="1.500"/></svg></button>
   <button aria-label="Battery"><svg viewBox="0 0 16 16"><path d="M5 5h9v7H6M15 7v3" fill="none" stroke="#fff" stroke-width="1.500"/><path d="M1 3v3q0 2 2 2v5M5 3v3q0 2-2 2" fill="none" stroke="#fff"/></svg></button>
   <button aria-label="Airplane mode"><svg viewBox="0 0 16 16"><path d="M6 1h2l3 5h3q2 2 0 4h-3l-3 5H6l1-5H4l-2 2H1l1-4-1-4h1l2 2h3z" fill="none" stroke="#fff"/></svg></button>
   <button aria-label="Volume"><svg viewBox="0 0 16 16"><path d="M1 6h2l3-3v10l-3-3H1z" fill="none" stroke="#fff"/><path d="M8 6q1 2 0 4M10 4q3 4 0 8M12.500 2.500q4 5 0 11" fill="none" stroke="#fff"/></svg></button>
   <button class="lang">ENG</button>
   <button class="clock"><span>8:36 PM</span><span>10/27/2019</span></button>
   <button class="notify" aria-label="Notifications"><svg viewBox="0 0 18 18"><path d="M1 2h15v12H9l-3 3v-3H1z" fill="#fff"/><path d="M3 5h11M3 8h11M3 11h6" stroke="#1b2a2e"/><circle cx="13" cy="13" r="3.500" fill="#fff" stroke="#1b2a2e"/></svg></button>
   <span class="desk"></span>
  </div>
</div>

<section class="dialog" aria-label="Floor">
  <div class="dialog-title"><svg class="d-ic" viewBox="0 0 16 16"><path d="M1 8l5-6h9l-4 6z" fill="#555" stroke="#222"/><path d="M1 8v3h10l4-6V2" fill="#777" stroke="#222"/><path d="M1 13h11" stroke="#c33" stroke-width="2" stroke-dasharray="2 1"/></svg><h2>Floor</h2>
   <button aria-label="Minimize dialog"><svg viewBox="0 0 12 12"><path d="M1 6.500h10" stroke="#111"/></svg></button><button disabled aria-label="Maximize dialog"><svg viewBox="0 0 12 12"><path d="M1.500 1.500h9v9h-9z" fill="none" stroke="#ccc"/></svg></button><button aria-label="Close dialog"><svg viewBox="0 0 12 12"><path d="M1 1l10 10M11 1L1 11" stroke="#111"/></svg></button></div>
  <div class="dialog-body">
   <div class="obj-row"><span>Object</span><label for="objno">No.</label><input id="objno" type="text" value="9"></div>
   <div class="sunk">
    <fieldset class="group"><legend>Properties</legend>
     <label for="thk">Thickness:</label><div class="combo g"><select id="thk"><option>WALLS</option></select><svg class="chev" viewBox="0 0 10 6"><path d="M1 1l4 4 4-4" fill="none" stroke="#444"/></svg></div><button aria-label="Thickness options">...</button>
     <label for="mat">Material:</label><input id="mat" type="text" value="C30" disabled><span></span>
     <label for="mod">Model:</label><div class="combo g"><select id="mod"><option>Shell</option></select><svg class="chev" viewBox="0 0 10 6"><path d="M1 1l4 4 4-4" fill="none" stroke="#444"/></svg></div><button aria-label="Model options">...</button>
    </fieldset>
   </div>
   <button class="section-btn sel">Definition method</button>
   <div class="sunk method">
    <div class="method-row">
     <svg class="contour" viewBox="0 0 80 54"><path d="M20.500 14.500L59.500 18 39 38.500H20.500z" fill="#c4c4c4" stroke="#333"/><path d="M19 13h3v3h-3zM58 17h3v3h-3zM38 37h3v3h-3zM19 37h3v3h-3z" fill="#e02030"/><path d="M34 46h1M43 46h1M50 39h1M56 33h1M63 26h1" stroke="#333"/><text x="9" y="12" class="p-t">P1</text><text x="62" y="22" class="p-t">Pn</text><text x="14" y="49" class="p-t">P2</text></svg>
     <div class="radios"><label><input type="radio" name="m" checked>Contour</label><label><input type="radio" name="m">Rectangle</label><label><input type="radio" name="m">Circle</label></div>
    </div>
    <label class="check"><input type="checkbox">Horizontal slab</label>
   </div>
   <button class="section-btn">Geometry</button>
   <button class="section-btn">Parameters</button>
   <div class="actions"><button class="primary">Apply</button><button>Close</button><button>Help</button></div>
  </div>
</section>
<svg class="cursor" viewBox="0 0 14 28"><path d="M1 1v14l3-3 3 6 2-1-2-6h4z" fill="#fff" stroke="#444"/><path d="M3 9v14l3-3 3 6 2-1-2-6h4z" fill="#fff" stroke="#222"/></svg>
<div class="watermark"><p class="w1">Activate Windows</p><p class="w2">Go to Settings to activate Windows.</p></div>
</body>
</html>
```
FILE: styles.css
```css
* { box-sizing: border-box; }
html, body { height: 100%; margin: 0; }
body { display: flex; flex-direction: column; min-height: 0; overflow: hidden; background: #f0f0f0; color: #1a1a1a; font-family: "Open Sans", "Noto Sans", sans-serif; font-size: 12px; }
button { margin: 0; padding: 0; border: 0; background: none; color: inherit; font: inherit; display: flex; align-items: center; justify-content: center; }
input, select { font: inherit; color: inherit; margin: 0; border-radius: 0; }
h1, h2, p { margin: 0; font-weight: 400; }
svg { display: block; flex: none; }
.gap { width: 7px; flex: none; }

/* Title bar */
.titlebar { position: relative; display: flex; flex: none; height: 24px; background: #fff; border-bottom: 1px solid #999; }
.app-button { position: absolute; left: 0; top: 0; z-index: 2; width: 38px; height: 39px; background: linear-gradient(#a5a5a5, #7c7c7c); border: 1px solid #444; }
.app-button svg { position: absolute; left: 0; top: 0; width: 38px; height: 38px; }
.pro { position: absolute; left: 9px; bottom: 0; font: bold 8px "DejaVu Sans", sans-serif; color: #111; }
.app-title { flex: 1; padding-left: 152px; font: 11px/22px Roboto, sans-serif; white-space: nowrap; }
.infocenter { display: flex; flex: none; width: 409px; background: linear-gradient(#999, #858585); border: 1px solid #666; border-width: 1px 0; }
.info-arrow { width: 14px; border-left: 1px solid #555; }
.info-arrow svg { width: 8px; height: 10px; }
.info-search { width: 168px; height: 20px; align-self: center; border: 1px solid #222; padding: 0 2px; background: #fff; font-size: 10px; }
.info-search::placeholder { color: #666; font-style: italic; opacity: 1; }
.info-icon { width: 22px; }
.info-icon svg { width: 18px; height: 18px; }
.user-button { width: 115px; gap: 4px; justify-content: flex-start; padding-left: 4px; font-size: 11px; }
.user-button svg { width: 16px; height: 16px; }
.user-button .drop { width: 6px; height: 5px; margin-left: auto; margin-right: 4px; }
.help-button { gap: 6px; margin-left: 12px; }
.help-button svg { width: 18px; height: 18px; }
.help-button .drop { width: 6px; height: 5px; }
.q-mark { font: bold 13px "Liberation Sans", sans-serif; fill: #2a56b0; }
.q-white { font: bold 13px "Liberation Sans", sans-serif; fill: #fff; }
.window-buttons { display: flex; flex: none; width: 153px; padding-left: 23px; }
.window-buttons button { width: 43px; }
.window-buttons svg { width: 11px; height: 11px; }

/* Menu bar */
.menubar { display: flex; flex: none; gap: 21px; height: 19px; padding-left: 52px; background: linear-gradient(#f2f2f2, #bcbcbc); border-bottom: 1px solid #aaa; font-size: 11px; }
.child-buttons { display: flex; margin-left: auto; }
.child-buttons button { width: 16px; }
.child-buttons svg { width: 11px; height: 11px; }

/* Toolbars */
.toolrow { display: flex; flex: none; height: 29px; background: #fff; }
.toolbar { display: flex; align-items: center; padding-left: 5px; background: #f1f1f1; border-right: 1px solid #aaa; border-bottom: 1px solid #a8a8a8; background-image: radial-gradient(circle, #bbb 1px, transparent 1px); background-size: 4px 4px; background-repeat: repeat-y; }
.toolbar-select { padding-left: 7px; }
.toolbar button { width: 30px; height: 26px; flex: none; }
.toolbar button svg { width: 21px; height: 21px; }
.toolbar .wide { width: 38px; padding-left: 6px; }
.toolbar .pressed { width: 29px; border: 1px solid #888; background: #dbe4ef; }
.ic-q { font: bold 12px "Liberation Serif", serif; fill: #111; }
.layout-pick { position: relative; display: flex; align-items: center; width: 177px; height: 21px; margin-left: 4px; padding-left: 4px; border: 1px solid #777; background: #fff; }
.layout-pick > svg { width: 16px; height: 14px; }
.layout-pick select, .combo select { appearance: none; flex: 1; min-width: 0; height: 100%; padding: 0; border: 0; background: none; }
.layout-pick select { font: 10px "Liberation Sans", sans-serif; padding-left: 1px; }
.layout-pick .chev, .combo .chev { width: 9px; height: 6px; margin-right: 4px; pointer-events: none; }
.combo { position: relative; display: flex; align-items: center; flex: none; width: 112px; height: 20px; border: 1px solid #888; background: #fff; }
.case { width: 225px; border-color: #ccc; background: #f0f0f0; }
.combo.mode { background: #ccc; border-color: #c4c4c4; }

/* Workspace */
.workspace { display: flex; flex: 1; min-height: 0; border-top: 1px solid #999; background: #f0f0f0; }
.inspector { display: flex; flex-direction: column; flex: none; width: 241px; margin-right: 5px; }
.panel-head { display: flex; justify-content: space-between; align-items: center; height: 21px; padding: 0 1px; }
.panel-head h2 { font: bold 11px "Liberation Sans", sans-serif; }
.panel-head button { width: 9px; height: 9px; background: #ccc; }
.panel-head button svg { width: 9px; height: 9px; }
.inspector-box { display: flex; flex-direction: column; flex: none; height: 236px; border: 1px solid #666; border-width: 2px 1px 2px 2px; padding-right: 4px; padding-bottom: 2px; }
.inspector-tools { display: flex; height: 29px; padding-left: 1px; align-items: center; }
.inspector-tools button { width: 24px; }
.inspector-tools .spaced { margin-left: 13px; }
.inspector-tools .spaced + .spaced { margin-left: 7px; }
.inspector-tools svg { width: 17px; height: 17px; }
.tree-wrap { flex: 1; background: #fff; border-top: 1px solid #555; padding-top: 2px; }
.tree { border-collapse: collapse; table-layout: fixed; width: 200px; font: 10px "Liberation Sans", sans-serif; white-space: nowrap; }
.tree th { height: 18px; padding: 0 0 0 7px; text-align: left; font-weight: 400; border-right: 1px solid #ddd; }
.tree th.num { width: 67px; padding-left: 6px; }
.tree td { height: 15px; padding: 0; line-height: 15px; }
.tree .num { padding-left: 6px; }
.node { display: flex; align-items: center; height: 15px; gap: 3px; }
.t1 { width: 27px; height: 15px; }
.t2 { width: 56px; height: 15px; }
.tabs { display: flex; height: 17px; padding-left: 1px; }
.tab { position: relative; height: 17px; padding: 0 8px; font-size: 10px; }
.tab.active { background: #fff; font-size: 11px; font-weight: 700; clip-path: polygon(0 0, 100% 0, 93% 100%, 7% 100%); }
.tab::after { content: ""; position: absolute; right: 2px; top: 0; width: 1px; height: 100%; background: #111; transform: skewX(-14deg); }
.tab.active::before { content: ""; position: absolute; left: 3px; top: 0; width: 1px; height: 100%; background: #111; transform: skewX(14deg); }
.props { display: flex; flex: 1; min-height: 0; margin-top: 4px; border: 1px solid #777; border-right: 0; }
.props-body { flex: 1; }
.props-table { border-collapse: collapse; width: 209px; table-layout: fixed; font-size: 11px; }
.props-table th { height: 18px; padding: 0; line-height: 16px; background: #c0c0c0; border: 1px solid #777; border-top: 0; font-weight: 400; }
.c-name { width: 89px; } .c-value { width: 85px; } .c-unit { width: 35px; }
.vscroll { display: flex; flex-direction: column; width: 15px; flex: none; background: #f0f0f0; }
.vscroll button { height: 16px; }
.vscroll svg { width: 8px; height: 6px; }
.vscroll span { flex: 1; }
.thumb { background: #cdcdcd; }
.empty-tab { height: 16px; }
.empty-tab svg { width: 22px; height: 16px; }
.panel-tabs { display: flex; height: 20px; gap: 1px; padding: 2px 0 2px 0; }
.panel-tabs button { width: 21px; height: 16px; border-right: 1px solid #333; border-bottom: 1px solid #333; }
.panel-tabs svg { width: 17px; height: 14px; }

.viewer { display: flex; flex-direction: column; flex: 1; min-width: 0; border-left: 2px solid #777; border-top: 2px solid #777; }
.view-row { display: flex; flex: 1; min-height: 0; }
.canvas { position: relative; flex: 1; min-width: 0; overflow: hidden; background: linear-gradient(#daf0fa, #def5fd 10%, #cfe3f5 45%, #b4c6e8); border-right: 1px solid #666; border-bottom: 1px solid #666; }
.model { width: 100%; height: 100%; overflow: visible; }
.faces path { fill: #c3cde3; }
.faces .f2 { fill: #c5d1e8; } .faces .f3 { fill: #c4d0e0; } .faces .f4 { fill: #bfc9d8; } .faces .f5 { fill: #b2bbcf; } .faces .f6 { fill: #c0c9dc; }
.grid path { fill: none; stroke: #8b9aa5; stroke-dasharray: 7 4 1 4; opacity: .8; }
.inner path { fill: none; stroke: #99a348; }
.edges path { fill: none; stroke: #1d2430; stroke-width: 1; }
.bubbles rect { fill: none; stroke: #8b9aa5; }
.marks text { font: 11px "Liberation Sans", sans-serif; fill: #84929c; text-anchor: middle; }
.rubber { stroke: #2434d8; stroke-width: 1; stroke-dasharray: 2 2; }
.cross-h { stroke: #4a5ae0; } .cross-v { stroke: #5566e6; stroke-width: 2; }
.snap { fill: none; stroke: #2434d8; }
.cube { position: absolute; right: 10px; top: 5px; width: 80px; height: 84px; }
.cube-t { font: 9px "Open Sans", sans-serif; fill: #75818c; }
.triad { position: absolute; left: 2px; bottom: 2px; width: 79px; height: 79px; border: 2px solid #ccdcf0; border-right-color: #55606c; border-bottom-color: #55606c; }
.triad svg { width: 76px; height: 76px; }
.az, .ay, .ax { font: 10px "Liberation Sans", sans-serif; }
.az { fill: #e8303a; } .ay { fill: #1e8a35; } .ax { fill: #2a36e0; }
.levelbar { position: absolute; left: 274px; bottom: 0; display: flex; height: 17px; background: linear-gradient(#fff, #d8d8d8); font: bold 10px/17px "Liberation Sans", sans-serif; }
.l-mode { width: 77px; text-align: center; border-right: 1px solid #bbb; }
.l-axis { width: 244px; padding-left: 9px; }
.levelbar button { width: 19px; border-left: 1px solid #777; }
.levelbar svg { width: 8px; height: 6px; }
.view-label { position: absolute; right: 0; bottom: 0; width: 106px; height: 17px; background: rgba(255,255,255,.12); text-align: center; color: #8492a8; font: bold 10px/17px "Liberation Sans", sans-serif; }
.main-scroll { width: 16px; background: #f2f2f2; border-right: 1px solid #999; }
.display-bar { display: flex; align-items: center; flex: none; height: 16px; gap: 2px; padding-left: 1px; background: #f3f3f3; border-bottom: 1px solid #999; }
.display-bar button { width: 20px; height: 14px; flex: none; border: 1px solid #b8b8b8; background: #f8f8f8; }
.display-bar svg { width: 18px; height: 12px; }
.display-bar .on { border-color: #2878c0; background: #dcecf8; }
.display-bar .hs-arrow, .display-bar .hs-arrow2 { border: 0; background: none; width: 16px; }
.display-bar .hs-arrow svg, .display-bar .hs-arrow2 svg { width: 5px; height: 8px; }
.hs-track { flex: 1; height: 14px; }
.hs-thumb { display: block; width: 44%; height: 14px; margin-left: 28%; background: #c2c2c2; }
.grip { width: 20px; height: 10px; flex: none; background: radial-gradient(circle, #aaa 1px, transparent 1px) 0 0 / 4px 4px; clip-path: polygon(60% 0, 60% 100%, 0 100%); }
.n-ic { font: bold 10px "Liberation Sans", sans-serif; fill: #2277cc; }
.n-sm { font: bold 7px "Liberation Sans", sans-serif; fill: #2277cc; }

.sidebar { display: flex; flex-direction: column; flex: none; width: 32px; padding-top: 7px; background: #f0f0f0; border-left: 1px solid #ddd; border-bottom: 1px solid #999; }
.sidebar button { width: 28px; height: 27px; flex: none; }
.sidebar svg { width: 21px; height: 21px; }
.sidebar .on { background: #e4e4e4; border: 1px solid #999; border-right-color: #fff; border-bottom-color: #fff; }
.vgap { height: 8px; flex: none; }
.s-n { font: 8px "Liberation Sans", sans-serif; text-anchor: middle; fill: #111; }

.view-tabs { flex: none; height: 20px; padding: 2px; border-top: 1px solid #ddd; border-bottom: 1px solid #ddd; display: flex; }
.view-tabs input { width: 38px; height: 15px; padding: 0 2px; border: 1px solid #999; border-width: 1px 0 0 1px; background: #fff; font-size: 10px; line-height: 14px; }

/* Status bar */
.statusbar { display: flex; flex: none; height: 18px; align-items: center; font-size: 11px; line-height: 18px; white-space: nowrap; }
.status-tools { display: flex; width: 420px; padding-left: 2px; }
.status-tools button { width: 17px; }
.status-tools svg { width: 15px; height: 14px; }
.cell { display: flex; align-items: center; border-right: 1px solid #d8d8d8; height: 18px; flex: none; }
.cell svg { width: 12px; height: 12px; }
.results { width: 235px; gap: 5px; }
.c-count { width: 47px; padding-left: 7px; }
.c-obj { width: 69px; padding-left: 5px; gap: 11px; }
.c-sec { width: 142px; padding-left: 8px; }
.c-xyz { width: 185px; padding-left: 5px; gap: 8px; }
.c-len { width: 93px; padding-left: 5px; gap: 6px; }
.c-units { flex: 1; padding-left: 6px; min-width: 0; }

/* Taskbar */
.taskbar { display: flex; flex: none; height: 37px; background: #1a272b; color: #fff; }
.start { width: 45px; }
.start svg { width: 16px; height: 16px; }
.task-search { display: flex; align-items: center; width: 322px; gap: 11px; padding-left: 11px; background: #f2f2f2; color: #333; }
.task-search svg { width: 16px; height: 16px; }
.task-search input { flex: 1; min-width: 0; border: 0; padding: 0; background: none; font-size: 13px; }
.task-search input::placeholder { color: #444; opacity: 1; }
.app { width: 46px; border-bottom: 2px solid transparent; }
.app svg { width: 22px; height: 22px; }
.app.open { border-image: linear-gradient(90deg, transparent 10%, #76b9ed 10%, #76b9ed 90%, transparent 90%) 2; border-width: 0 0 2px; }
.app.current { background: #4a5458; border-image: none; border-bottom: 2px solid #76b9ed; }
.s-pro { font: bold 6px "Liberation Sans", sans-serif; fill: #fff; text-anchor: middle; }
.tray { display: flex; margin-left: auto; font-size: 11px; }
.tray button { width: 23px; }
.tray svg { width: 16px; height: 16px; }
.tray .lang { width: 31px; }
.tray .clock { width: 56px; flex-direction: column; font-size: 10px; line-height: 17px; }
.tray .notify { width: 50px; }
.desk { width: 5px; border-left: 1px solid #667; }

/* Floor dialog */
.dialog { position: absolute; right: 31px; top: 182px; z-index: 5; width: 243px; border: 1px solid #8a8a8a; background: #f0f0f0; box-shadow: 0 5px 14px rgba(0,0,0,.35); font: 10px "Open Sans", sans-serif; }
.dialog-title { display: flex; align-items: center; height: 27px; padding-left: 7px; background: #fff; }
.dialog-title h2 { flex: 1; font-size: 11px; }
.dialog-title button { width: 43px; height: 27px; }
.dialog-title svg { width: 12px; height: 12px; }
.dialog-title .d-ic { width: 16px; height: 16px; margin-right: 4px; }
.dialog-body { display: flex; flex-direction: column; padding: 7px 10px 7px 11px; }
.obj-row { display: flex; align-items: center; height: 19px; gap: 12px; }
.obj-row input { width: 42px; height: 19px; margin-left: -9px; border: 1px solid #777; background: #fff; padding: 0 5px; }
.sunk { margin-top: 2px; border-left: 1px solid #666; border-top: 1px solid #888; border-right: 1px solid #fff; border-bottom: 1px solid #fff; padding: 4px 3px 5px 2px; }
.group { display: grid; grid-template-columns: 65px 106px 22px; gap: 2px 4px; align-items: center; margin: 0; padding: 3px 0 0 8px; border: 1px solid #ddd; height: 84px; grid-auto-rows: 20px; }
.group legend { padding: 0 2px; margin-left: -4px; line-height: 14px; }
.combo.g { width: 106px; height: 20px; background: #e2e2e2; border-color: #aaa; padding-left: 3px; }
.combo.g .chev { margin-right: 3px; }
.group input { width: 106px; height: 19px; border: 1px solid #ccc; padding: 0 4px; background: #f0f0f0; color: #888; }
.group button { height: 14px; border: 1px solid #999; background: #e1e1e1; line-height: 8px; padding-bottom: 3px; }
.section-btn { height: 15px; margin-top: 5px; background: #e1e1e1; border: 1px solid #adadad; }
.section-btn.sel { margin-top: 9px; background: #c4e0f8; border-color: #456f9c; }
.sunk.method { margin-top: 2px; padding: 11px 0 9px 8px; }
.sunk.method + .section-btn { margin-top: 10px; }
.method-row { display: flex; gap: 4px; }
.contour { width: 80px; height: 54px; background: #fff; border: 1px solid #ccc; }
.p-t { font: 10px "Liberation Sans", sans-serif; fill: #222; }
.radios { display: flex; flex-direction: column; gap: 7px; }
.radios label, .check { display: flex; align-items: center; gap: 2px; height: 13px; }
.radios input { appearance: none; width: 12px; height: 12px; border: 1px solid #444; border-radius: 50%; background: #fff; }
.radios input:checked { background: radial-gradient(circle, #222 0 3px, #fff 4px); }
.check { margin-left: 28px; margin-top: 2px; width: 90px; }
.check input { appearance: none; width: 12px; height: 12px; border: 1px solid #444; background: #fff; }
.actions { display: flex; gap: 7px; margin-top: 11px; }
.actions button { flex: 1; height: 18px; border: 1px solid #adadad; background: #e1e1e1; }
.actions .primary { border: 2px solid #0078d7; }
.cursor { position: absolute; right: 182px; top: 189px; z-index: 6; width: 14px; height: 28px; }
.watermark { position: absolute; right: 54px; bottom: 68px; width: 220px; z-index: 4; pointer-events: none; color: rgba(125,130,140,.55); white-space: nowrap; }
.w1 { font-size: 18px; line-height: 22px; }
.w2 { font-size: 13px; line-height: 19px; }
```
